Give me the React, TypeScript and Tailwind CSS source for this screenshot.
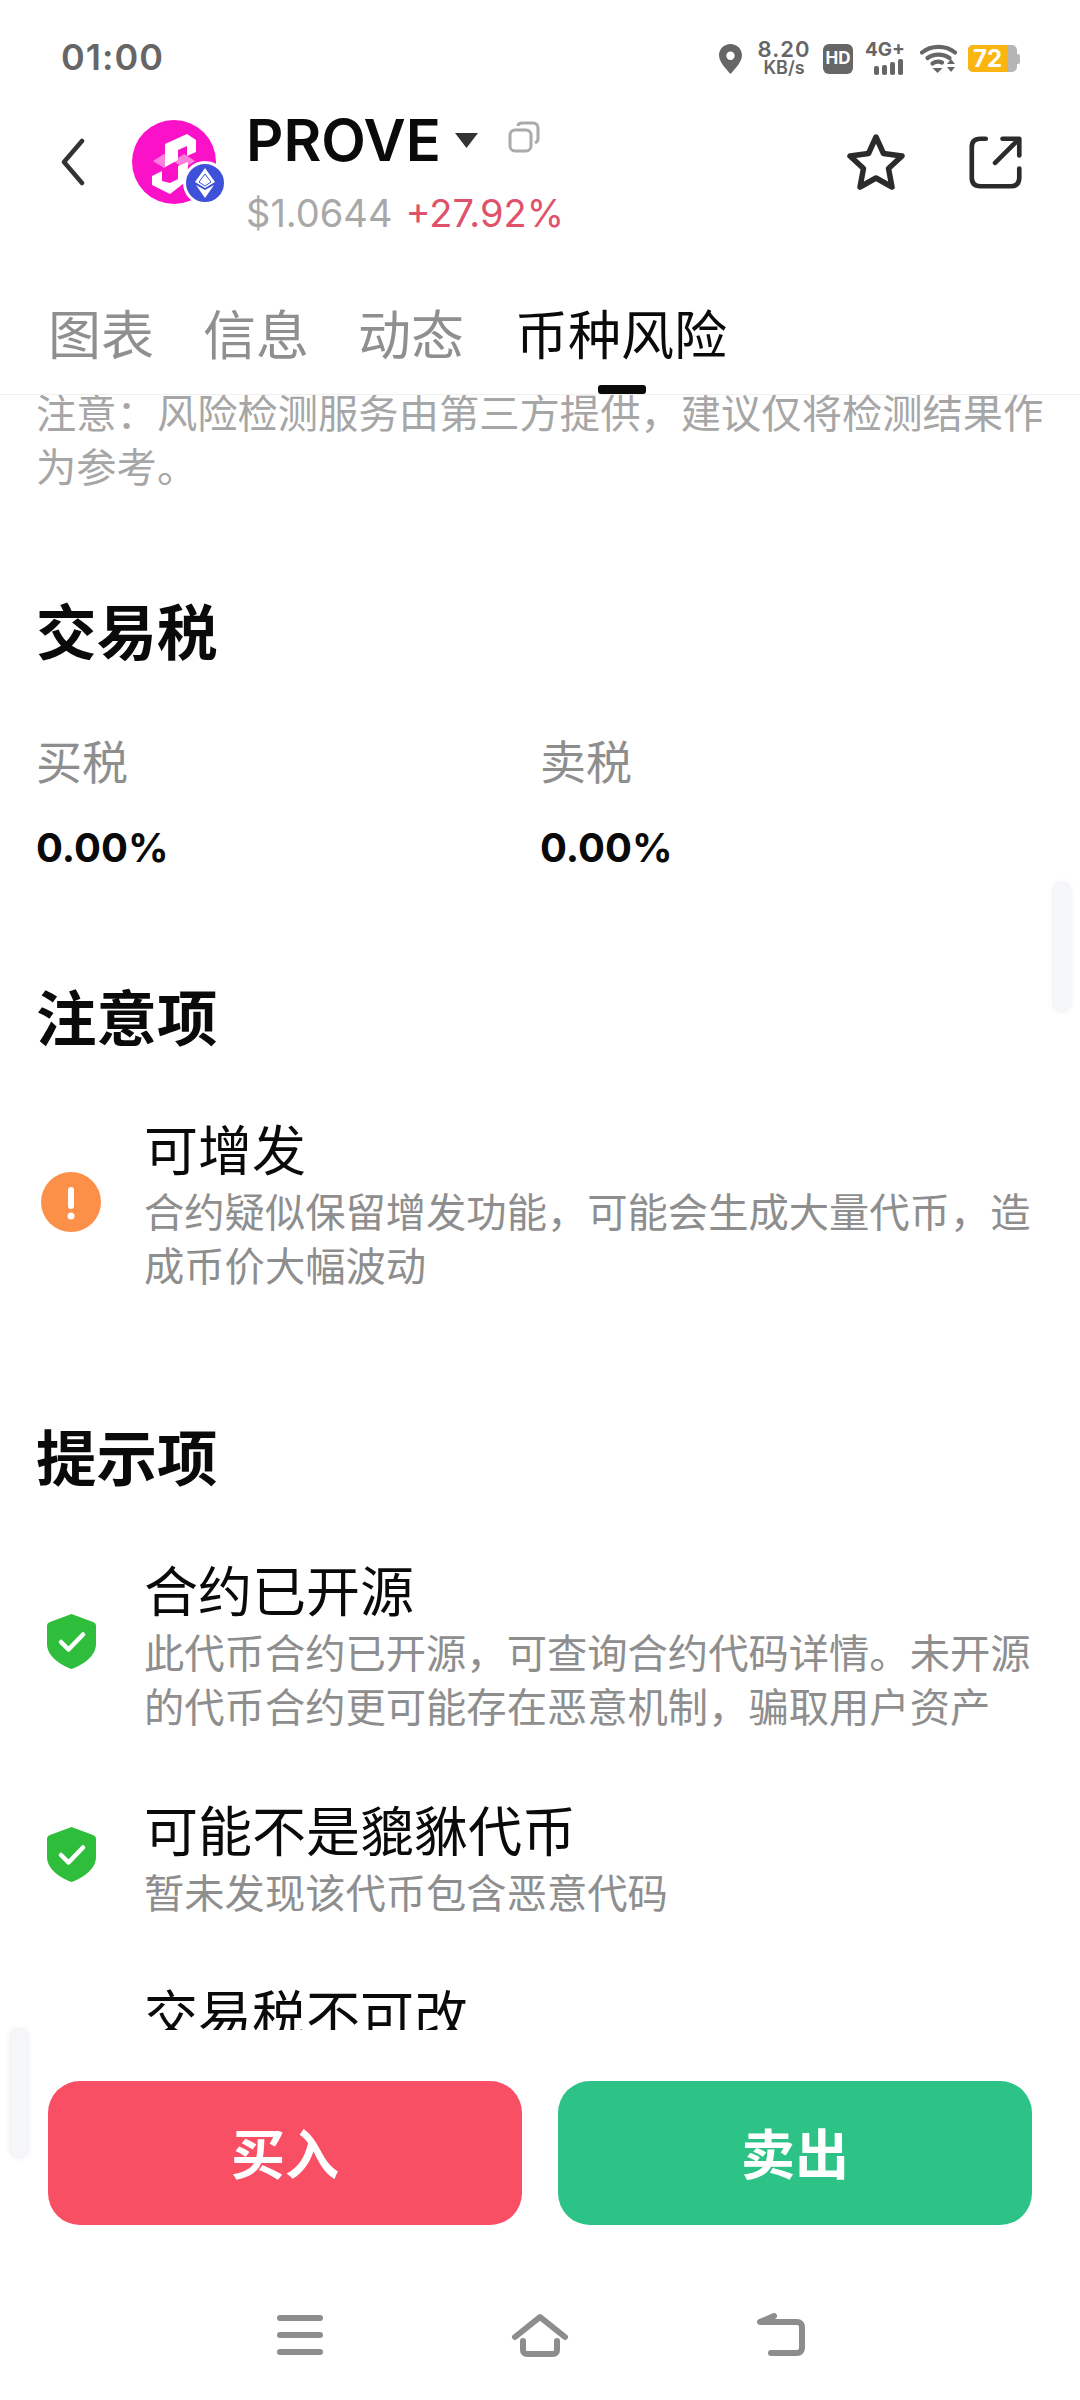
import { ReactNode } from "react"

const font = { fontFamily: '"Inter", "Noto Sans CJK SC", sans-serif' }

const Pin = () => (
    <svg width="23" height="30" viewBox="0 0 23 30">
        <path fillRule="evenodd" fill="#666" d="M11.5 0C5 0 0 5 0 11.3 0 18 7 25 11.5 30 16 25 23 18 23 11.3 23 5 18 0 11.5 0ZM11.5 7.5a4.2 4.2 0 1 1 0 8.4 4.2 4.2 0 0 1 0-8.4Z" />
    </svg>
)

const Wifi = () => (
    <svg width="37" height="29" viewBox="0 0 37 29" fill="none">
        <path d="M2 8.5C11 1 26 1 35 8.5" stroke="#666" strokeWidth="4.2" strokeLinecap="round" />
        <path d="M7.5 14C13.500 9.500 23.500 9.500 29.500 14" stroke="#666" strokeWidth="4.2" strokeLinecap="round" />
        <path d="M12.500 19.500C15.500 17.500 19 17.300 22 18.500" stroke="#666" strokeWidth="4.2" strokeLinecap="round" />
        <path d="M12.500 24H22.500L17.500 29Z" fill="#666" />
        <path d="M27 20L31 15L35 20ZM27 23H35L31 28Z" fill="#666" />
    </svg>
)

const StatusBar = () => (
    <div className="flex h-[85px] items-start justify-between pl-[61px] pr-[60px] pt-[38px]">
        <span className="text-[36px] leading-[38px] font-semibold tracking-[1px] text-[#666]">01:00</span>
        <div className="mt-[2px] flex items-center gap-[11px] text-[#666]">
            <Pin />
            <div className="ml-[3px] flex w-[56px] flex-col items-center font-semibold">
                <span className="text-[22px] leading-[19px] tracking-[1px]">8.20</span>
                <span className="text-[18px] leading-[18px]">KB/s</span>
            </div>
            <span className="flex h-[30px] w-[30px] items-center justify-center rounded-[6px] bg-[#666] text-[17px] leading-none font-bold text-white">HD</span>
            <div className="ml-[1px] flex w-[44px] flex-col">
                <span className="text-[19px] leading-[16px] font-bold">4G+</span>
                <div className="mt-[1px] ml-[9px] flex items-end gap-[3px]">
                    <i className="h-[9px] w-[5px] rounded-[2px] bg-[#666]" />
                    <i className="h-[10px] w-[5px] rounded-[2px] bg-[#666]" />
                    <i className="h-[13px] w-[5px] rounded-[2px] bg-[#666]" />
                    <i className="h-[16px] w-[5px] rounded-[2px] bg-[#666]" />
                </div>
            </div>
            <Wifi />
            <div className="flex items-center">
                <div className="flex h-[27px] w-[49px] overflow-hidden rounded-[5px] bg-[#b5b5b5]">
                    <span className="h-full w-[39px] bg-[#fbb511] text-center text-[24px] leading-[27px] font-bold text-white">72</span>
                </div>
                <i className="h-[10px] w-[3px] rounded-r-[2px] bg-[#b5b5b5]" />
            </div>
        </div>
    </div>
)

const Logo = () => (
    <div className="relative h-[84px] w-[84px] shrink-0">
        <svg width="84" height="84" viewBox="0 0 84 84">
            <circle cx="42" cy="42" r="42" fill="#fb12c8" />
            <path d="M21 41L32 34L43 41L32 48ZM41 41L52 34L63 41L52 48Z" fill="#fd80dc" />
            <path d="M33 24L55 14L64 20V32L55 36V26L46 30V40L33 47Z" fill="#fff" />
            <path d="M20 56L30 51V61L38 63L46 59V46L56 42V60L38 74L20 65Z" fill="#fff" />
        </svg>
        <div className="absolute -right-[11px] -bottom-[1px] flex h-[44px] w-[44px] items-center justify-center rounded-full border-[3px] border-white bg-[#3f51d9]">
            <svg width="20" height="30" viewBox="0 0 20 30">
                <path d="M10 0L20 14L10 20L0 14Z" fill="#fff" />
                <path d="M10 6L16 14L10 18L4 14Z" fill="none" stroke="#3f51d9" strokeWidth="1" />
                <path d="M1 17L10 22L19 17L10 30Z" fill="#fff" />
            </svg>
        </div>
    </div>
)

const Header = () => (
    <div className="flex h-[135px] pt-[33px]">
        <svg className="ml-[60px] mt-[20px] shrink-0" width="26" height="48" viewBox="0 0 26 48" fill="none">
            <path d="M22 3L4 24L22 45" stroke="#333" strokeWidth="4.500" strokeLinecap="round" strokeLinejoin="round" />
        </svg>
        <div className="ml-[46px] mt-[2px]">
            <Logo />
        </div>
        <div className="ml-[30px] -mt-[8px] flex flex-col">
            <div className="flex items-center">
                <span className="text-[58px] leading-[60px] font-semibold text-[#0a0a0a]">PROVE</span>
                <svg className="ml-[14px]" width="23" height="15" viewBox="0 0 23 15">
                    <path d="M0 0H23L11.500 15Z" fill="#333" />
                </svg>
                <svg className="ml-[30px] -mt-[6px]" width="32" height="32" viewBox="0 0 32 32" fill="none" stroke="#aaa" strokeWidth="3">
                    <rect x="2" y="9" width="21" height="21" rx="5" />
                    <path d="M10 5C10 3 12 2 14 2H25C28 2 30 4 30 7V18C30 20 29 21 27 22" />
                </svg>
            </div>
            <div className="mt-[21px] flex gap-[13px] text-[38px] leading-[44px]">
                <span className="text-[#a8a8a8]">$1.0644</span>
                <span className="text-[#e0526a]">+27.92%</span>
            </div>
        </div>
        <div className="ml-auto mr-[57px] mt-[13px] flex items-start gap-[62px]">
            <svg width="62" height="62" viewBox="0 0 62 62" fill="none">
                <path d="M31 6L38.500 22.500L57 25L43.500 37.500L47 56L31 47L15 56L18.500 37.500L5 25L23.500 22.500Z" stroke="#2b2b2b" strokeWidth="5.500" strokeLinejoin="round" />
            </svg>
            <svg className="mt-[4px]" width="54" height="54" viewBox="0 0 58 58" fill="none" stroke="#2b2b2b" strokeWidth="5" strokeLinecap="round" strokeLinejoin="round">
                <path d="M18 4H12C6 4 3 7 3 13V46C3 52 6 55 12 55H45C51 55 54 52 54 46V36" />
                <path d="M28 30L53 5M36 4H54V22" />
            </svg>
        </div>
    </div>
)

const tabs = ["图表", "信息", "动态"]

const Tabs = () => (
    <div className="relative flex h-[175px] items-start gap-[49px] border-b border-[#f0f0f0] pl-[48px] pt-[85px] text-[53px] leading-[62px]">
        {tabs.map((t) => (
            <span key={t} className="text-[#8f8f8f]">
                {t}
            </span>
        ))}
        <span className="ml-[2px] text-[#0a0a0a]">币种风险</span>
        <i className="absolute bottom-0 left-[598px] h-[9px] w-[48px] rounded-[3px] bg-[#0a0a0a]" />
    </div>
)

const SectionTitle = ({ children, className }: { children: ReactNode; className: string }) => (
    <h2 className={`${className} text-[60.5px] leading-[80px] font-bold text-[#0a0a0a]`}>{children}</h2>
)

const Warn = () => (
    <svg className="mb-[12px] ml-[5px]" width="60" height="60" viewBox="0 0 60 60">
        <circle cx="30" cy="30" r="30" fill="#fd9048" />
        <rect x="27" y="15" width="6" height="22" rx="3" fill="#fff" />
        <circle cx="30" cy="44" r="3.500" fill="#fff" />
    </svg>
)

const Shield = () => (
    <svg className="mb-[16px] ml-[11px]" width="49" height="55" viewBox="0 0 49 55">
        <path d="M24.500 0L46 8C48 8.800 49 10 49 12V30C49 42 36 51 24.500 55 13 51 0 42 0 30V12C0 10 1 8.800 3 8L24.500 0Z" fill="#2fbd3c" />
        <path d="M14 28L21.500 35.500L36 20.500" fill="none" stroke="#fff" strokeWidth="4.500" strokeLinecap="round" strokeLinejoin="round" />
    </svg>
)

const RiskItem = ({ icon, title, lines, className }: { icon: ReactNode; title: string; lines: string[]; className: string }) => (
    <div className={`${className} flex`}>
        <div className="flex w-[108px] shrink-0 items-center">{icon}</div>
        <div className="flex flex-col">
            <span className="text-[54px] leading-[60px] text-[#0a0a0a]">{title}</span>
            <div className="mt-[4px] text-[40.3px] leading-[54px] whitespace-nowrap text-[#8e8e8e]">
                {lines.map((l) => (
                    <div key={l}>{l}</div>
                ))}
            </div>
        </div>
    </div>
)

const Content = () => (
    <div className="min-h-0 flex-1 overflow-hidden pl-[36px]">
        <div className="-mt-[8px] text-[40.3px] leading-[54px] whitespace-nowrap text-[#a6a6a6]">
            <div>注意：风险检测服务由第三方提供，建议仅将检测结果作</div>
            <div>为参考。</div>
        </div>
        <SectionTitle className="mt-[98px]">交易税</SectionTitle>
        <div className="mt-[59px] flex text-[46px] leading-[60px] text-[#8e8e8e]">
            <span className="w-[504px]">买税</span>
            <span>卖税</span>
        </div>
        <div className="mt-[31px] flex text-[40px] leading-[50px] font-bold text-[#0a0a0a]">
            <span className="w-[504px]">0.00%</span>
            <span>0.00%</span>
        </div>
        <SectionTitle className="mt-[106px]">注意项</SectionTitle>
        <RiskItem
            className="mt-[63px]"
            icon={<Warn />}
            title="可增发"
            lines={["合约疑似保留增发功能，可能会生成大量代币，造", "成币价大幅波动"]}
        />
        <SectionTitle className="mt-[125px]">提示项</SectionTitle>
        <RiskItem
            className="mt-[64px]"
            icon={<Shield />}
            title="合约已开源"
            lines={["此代币合约已开源，可查询合约代码详情。未开源", "的代币合约更可能存在恶意机制，骗取用户资产"]}
        />
        <RiskItem
            className="mt-[68px]"
            icon={<Shield />}
            title="可能不是貔貅代币"
            lines={["暂未发现该代币包含恶意代码"]}
        />
        <RiskItem className="mt-[66px]" icon={<span />} title="交易税不可改" lines={[]} />
    </div>
)

const BottomBar = () => (
    <div className="h-[370px] shrink-0 bg-white">
        <div className="flex gap-[36px] pl-[48px] pt-[51px]">
            <button className="h-[144px] w-[474px] rounded-[32px] bg-[#f94f64] pt-[4px] text-[54px] font-bold text-white">买入</button>
            <button className="h-[144px] w-[474px] rounded-[32px] bg-[#2dc286] pt-[4px] text-[54px] font-bold text-white">卖出</button>
        </div>
        <div className="mt-[88px] flex items-center gap-[180px] pl-[270px]">
            <svg width="60" height="44" viewBox="0 0 60 44" fill="none" stroke="#8d8d8d" strokeWidth="6" strokeLinecap="round">
                <path d="M10 5H50M10 22H50M10 39H50" />
            </svg>
            <svg width="60" height="44" viewBox="0 0 60 44" fill="none" stroke="#8d8d8d" strokeWidth="6" strokeLinecap="round" strokeLinejoin="round">
                <path d="M5 23L30 3L55 23M13 27V36C13 38.500 14.500 40 17 40H43C45.500 40 47 38.500 47 36V27" transform="translate(0 1)" />
            </svg>
            <svg width="60" height="44" viewBox="0 0 60 44" fill="none" stroke="#8d8d8d" strokeWidth="6" strokeLinecap="round" strokeLinejoin="round">
                <path d="M24 3L10 9H47C50 9 52 11 52 14V35C52 38 50 40 47 40H21" />
            </svg>
        </div>
    </div>
)

const ScrollHint = ({ className }: { className: string }) => (
    <div className={`${className} absolute h-[130px] w-[18px] rounded-full border border-[#f3f3f6] bg-[#f6f7fb] shadow-[0_0_6px_#eeeeee]`} />
)

const App = () => {
    return (
        <div className="relative flex h-[2400px] w-[1080px] flex-col overflow-hidden bg-white" style={font}>
            <StatusBar />
            <Header />
            <Tabs />
            <Content />
            <BottomBar />
            <ScrollHint className="left-[1053px] top-[882px]" />
            <ScrollHint className="left-[10px] top-[2028px]" />
        </div>
    )
}

export default App
